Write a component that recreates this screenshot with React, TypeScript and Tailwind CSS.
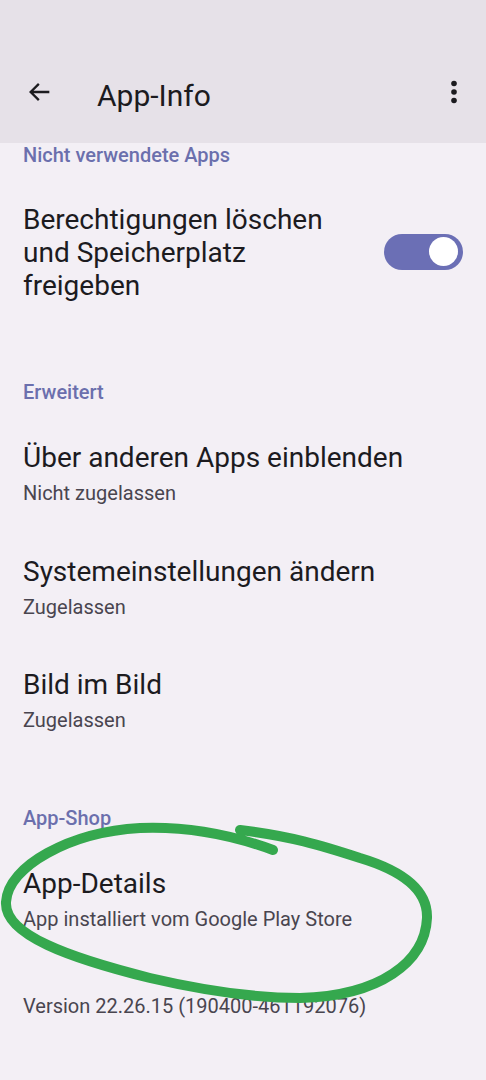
import React from "react";

function Item({ title, sub }: { title: string; sub: string }) {
  return (
    <div className="flex flex-col">
      <div className="text-[28px] leading-[34px] text-[#1c1b1f]">{title}</div>
      <div className="text-[20px] leading-[26px] text-[#49454f] mt-[5px]">{sub}</div>
    </div>
  );
}

function Section({ children }: { children: React.ReactNode }) {
  return <div className="text-[20px] leading-[24px] font-medium text-[#6b6fad]">{children}</div>;
}

export default function App() {
  return (
    <div className="relative w-[486px] h-[1080px] overflow-hidden bg-[#f3eff5]" style={{ fontFamily: "Roboto, 'Noto Sans', sans-serif" }}>
      <div className="h-[143px] bg-[#e6e1e8] flex items-end pb-[27px]">
        <div className="flex items-center w-full h-[48px]">
          <div className="w-[97px] pl-[26px] flex items-center">
            <svg width="28" height="28" viewBox="0 0 24 24" fill="none">
              <path d="M20 12H4.5M11 5l-7 7 7 7" stroke="#1c1b1f" strokeWidth="2" strokeLinecap="butt" strokeLinejoin="miter" />
            </svg>
          </div>
          <div className="flex-1 text-[30px] leading-[36px] text-[#1c1b1f] pt-[8px]">App-Info</div>
          <div className="w-[48px] flex justify-center pr-[16px]">
            <svg width="8" height="24" viewBox="0 0 8 24">
              <circle cx="4" cy="3.5" r="2.8" fill="#1c1b1f" />
              <circle cx="4" cy="12" r="2.8" fill="#1c1b1f" />
              <circle cx="4" cy="20.5" r="2.8" fill="#1c1b1f" />
            </svg>
          </div>
        </div>
      </div>

      <div className="px-[23px]">
        <Section>Nicht verwendete Apps</Section>

        <div className="flex items-center justify-between mt-[36px]">
          <div className="text-[28px] leading-[33px] text-[#1c1b1f]">
            Berechtigungen löschen<br />und Speicherplatz<br />freigeben
          </div>
          <div className="w-[79px] h-[36px] rounded-full bg-[#6b6fb5] flex items-center justify-end pr-[5px] mb-[2px]">
            <div className="w-[29px] h-[29px] rounded-full bg-white" />
          </div>
        </div>

        <div className="mt-[78px]"><Section>Erweitert</Section></div>

        <div className="mt-[37px]"><Item title="Über anderen Apps einblenden" sub="Nicht zugelassen" /></div>
        <div className="mt-[49px]"><Item title="Systemeinstellungen ändern" sub="Zugelassen" /></div>
        <div className="mt-[48px]"><Item title="Bild im Bild" sub="Zugelassen" /></div>

        <div className="mt-[73px]"><Section>App-Shop</Section></div>
        <div className="mt-[37px]"><Item title="App-Details" sub="App installiert vom Google Play Store" /></div>

        <div className="mt-[61px] text-[20px] leading-[26px] text-[#49454f]">Version 22.26.15 (190400-461192076)</div>
      </div>

      <svg className="absolute left-0 top-0 pointer-events-none" width="486" height="1080" viewBox="0 0 486 1080" fill="none">
        <path
          d="M273 850 C235 836 190 826 140 828 C70 832 8 866 6 902 C4 935 70 958 150 978 C210 992 260 998 300 998 C380 996 425 962 427 918 C428 888 400 870 360 858 C320 845 290 836 240 830"
          stroke="#35a84e"
          strokeWidth="10"
          strokeLinecap="round"
          strokeLinejoin="round"
        />
      </svg>
    </div>
  );
}
